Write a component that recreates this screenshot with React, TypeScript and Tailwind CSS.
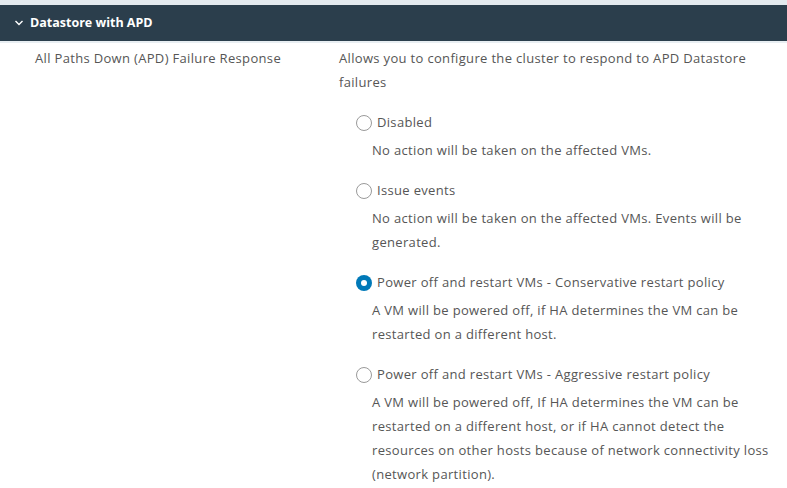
export default function App() {
  const options = [
    {
      label: 'Disabled',
      desc: ['No action will be taken on the affected VMs.'],
      checked: false,
    },
    {
      label: 'Issue events',
      desc: ['No action will be taken on the affected VMs. Events will be', 'generated.'],
      checked: false,
    },
    {
      label: 'Power off and restart VMs - Conservative restart policy',
      desc: ['A VM will be powered off, if HA determines the VM can be', 'restarted on a different host.'],
      checked: true,
    },
    {
      label: 'Power off and restart VMs - Aggressive restart policy',
      desc: [
        'A VM will be powered off, If HA determines the VM can be',
        'restarted on a different host, or if HA cannot detect the',
        'resources on other hosts because of network connectivity loss',
        '(network partition).',
      ],
      checked: false,
    },
  ];

  return (
    <div className="w-[787px] h-[488px] overflow-hidden bg-white font-['Open_Sans',sans-serif] text-[13px] tracking-[0.33px] text-[#565656]">
      <div className="h-[5px] bg-[#e3e9ee]" />
      {/* Section header */}
      <div className="h-[36px] bg-[#2b3e4c] flex items-center pl-[14px] border-b-2 border-[#e8eef2] box-content">
        <svg width="10" height="10" viewBox="0 0 10 10" className="mr-[6px]">
          <path d="M1.5 3 L5 6.5 L8.5 3" fill="none" stroke="#fff" strokeWidth="1.4" />
        </svg>
        <span className="text-white font-bold text-[12.5px] tracking-normal">Datastore with APD</span>
      </div>

      <div className="flex pt-[3px]">
        <div className="w-[339px] shrink-0 pl-[35px] leading-[24px]">All Paths Down (APD) Failure Response</div>
        <div className="flex-1">
          <div className="leading-[24px] pr-[20px]">
            Allows you to configure the cluster to respond to APD Datastore
            <br />
            failures
          </div>
          <div className="pl-[17px] pt-[16px] flex flex-col gap-[16px]">
            {options.map((o) => (
              <div key={o.label}>
                <div className="flex items-center h-[24px] pt-[2px]">
                  {o.checked ? (
                    <span className="w-[16px] h-[16px] rounded-full bg-[#0079b8] flex items-center justify-center">
                      <span className="w-[6px] h-[6px] rounded-full bg-white" />
                    </span>
                  ) : (
                    <span className="w-[16px] h-[16px] rounded-full border border-[#9a9a9a] bg-white" />
                  )}
                  <span className="ml-[5px]">{o.label}</span>
                </div>
                <div className="pl-[16px] mt-[4px] leading-[24px]">
                  {o.desc.map((d) => (
                    <div key={d}>{d}</div>
                  ))}
                </div>
              </div>
            ))}
          </div>
        </div>
      </div>
    </div>
  );
}
